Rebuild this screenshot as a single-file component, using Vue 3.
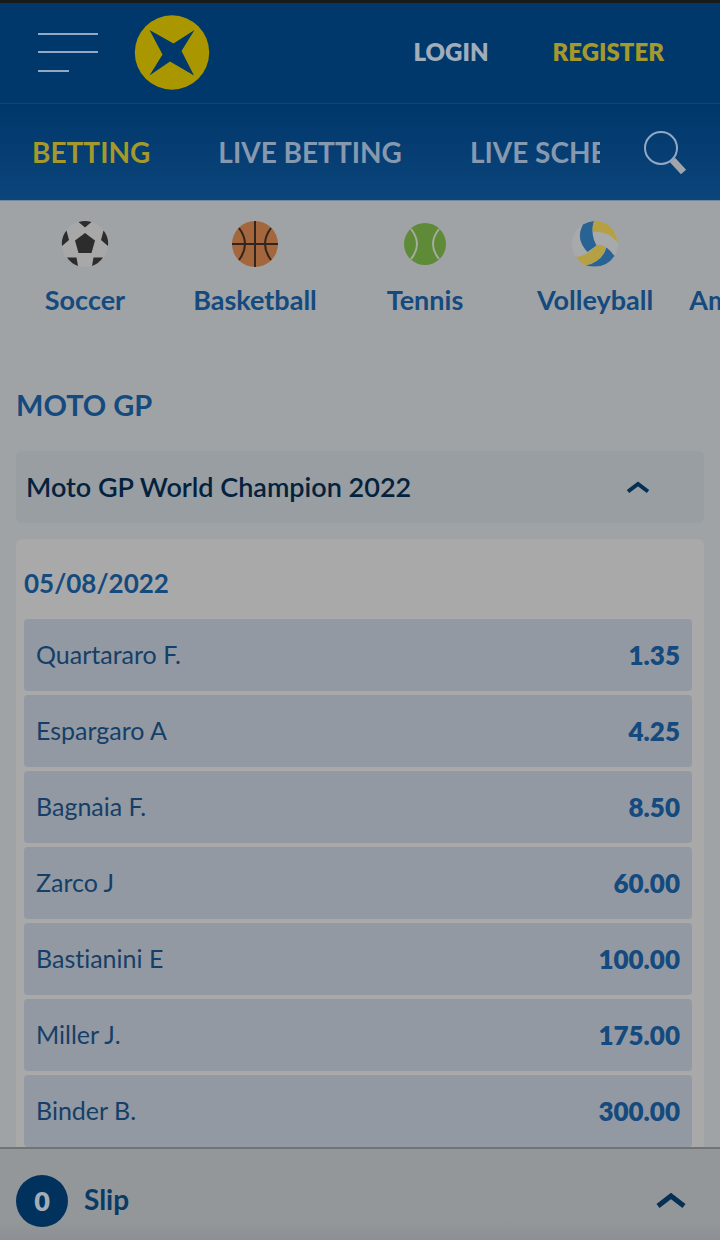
<script setup>
import { ref } from 'vue'

const navItems = ['BETTING', 'LIVE BETTING', 'LIVE SCHEDULE']
const activeNav = ref('BETTING')
const open = ref(true)

const sports = [
  { id: 'soccer', name: 'Soccer' },
  { id: 'basketball', name: 'Basketball' },
  { id: 'tennis', name: 'Tennis' },
  { id: 'volleyball', name: 'Volleyball' },
  { id: 'football', name: 'Am. Football' },
]

const odds = [
  { rider: 'Quartararo F.', price: '1.35' },
  { rider: 'Espargaro A', price: '4.25' },
  { rider: 'Bagnaia F.', price: '8.50' },
  { rider: 'Zarco J', price: '60.00' },
  { rider: 'Bastianini E', price: '100.00' },
  { rider: 'Miller J.', price: '175.00' },
  { rider: 'Binder B.', price: '300.00' },
]
</script>

<template>
  <div class="app">
    <header class="header">
      <div class="topbar">
        <button class="menu" type="button" aria-label="Menu">
          <svg width="60" height="42" viewBox="0 0 60 42">
            <path d="M0 2H60M0 20H60M0 39H31" stroke="#93a9c3" stroke-width="2" />
          </svg>
        </button>
        <a class="logo" href="#" aria-label="Home">
          <svg width="76" height="76" viewBox="0 0 76 76">
            <circle cx="38" cy="37.500" r="37.200" fill="#aa9700" />
            <path d="M15.500 15 L39.500 28.500 L60.500 15 L47.500 36 L60 60.500 L36 46.500 L15.500 60.500 L28.500 39.500 Z" fill="#00386c" />
          </svg>
        </a>
        <div class="account">
          <a class="login" href="#">LOGIN</a>
          <a class="register" href="#">REGISTER</a>
        </div>
      </div>
      <div class="navbar">
        <nav class="nav">
          <a
            v-for="item in navItems"
            :key="item"
            href="#"
            :class="{ active: item === activeNav }"
            @click.prevent="activeNav = item"
          >{{ item }}</a>
        </nav>
        <button class="search" type="button" aria-label="Search">
          <svg width="44" height="46" viewBox="0 0 44 46">
            <circle cx="17" cy="19" r="16" fill="none" stroke="#93a9c3" stroke-width="2" />
            <path d="M28.500 31 L39.500 43" stroke="#a0a6ac" stroke-width="7" />
          </svg>
        </button>
      </div>
    </header>

    <main class="content">
      <nav class="sports">
        <a v-for="s in sports" :key="s.id" href="#" class="sport">
          <svg v-if="s.id === 'soccer'" width="48" height="48" viewBox="0 0 48 48">
            <circle cx="24" cy="24" r="23" fill="#a8a8a8" />
            <path d="M24 13 L34 20.500 L30.500 33 H17.500 L14 20.500 Z M17.500 2 Q24 0 30.500 2 L24 7.500 Z M5.500 10.500 L8 20 L1 26 Q0 17 5.500 10.500 Z M42.500 10.500 L40 20 L47 26 Q48 17 42.500 10.500 Z M6 37.500 H15.500 L17 46 Q10 43.500 6 37.500 Z M42 37.500 H32.500 L31 46 Q38 43.500 42 37.500 Z" fill="#2c2c2d" />
          </svg>
          <svg v-else-if="s.id === 'basketball'" width="48" height="48" viewBox="0 0 48 48">
            <circle cx="24" cy="24" r="23" fill="#a4663c" />
            <path d="M24 1V47M1 24H47M8 8Q20 24 8 40M40 8Q28 24 40 40" fill="none" stroke="#33251d" stroke-width="2" />
          </svg>
          <svg v-else-if="s.id === 'tennis'" width="48" height="48" viewBox="0 0 48 48">
            <circle cx="24" cy="24" r="21" fill="#5f8a38" />
            <path d="M10 9Q22 24 10 39M38 9Q26 24 38 39" fill="none" stroke="#a5aca0" stroke-width="2" />
          </svg>
          <svg v-else-if="s.id === 'volleyball'" width="48" height="48" viewBox="0 0 48 48">
            <circle cx="24" cy="24" r="23" fill="#a8a9aa" />
            <path d="M12 4.500 Q17 1.500 23 1 Q19 14 25.500 25.500 L16.500 32 Q4 19 12 4.500 Z" fill="#286393" />
            <path d="M23 1 Q43 1 47 23 Q37 10 21.500 12 Q21 6 23 1 Z" fill="#b5a143" />
            <path d="M5 37 Q16 36 26 25 Q31 24 35 27.500 Q30 42 15 45.500 Q9 43 5 37 Z" fill="#b5a143" />
            <path d="M35.500 27.500 Q40 31 43.500 36 Q34 50 15 45.500 Q31 42 35.500 27.500 Z" fill="#286393" />
          </svg>
          <svg v-else width="48" height="48" viewBox="0 0 48 48">
            <ellipse cx="24" cy="24" rx="22" ry="14" fill="#7a4a2c" />
            <path d="M15 24H33M20 20V28M24 20V28M28 20V28" stroke="#a7a8a9" stroke-width="2" />
          </svg>
          <span>{{ s.name }}</span>
        </a>
      </nav>

      <h1 class="title">MOTO GP</h1>

      <button class="event" type="button" :aria-expanded="open" @click="open = !open">
        <span class="event-name">Moto GP World Champion 2022</span>
        <svg width="24" height="14" viewBox="0 0 24 14">
          <path d="M2 11.500 L12 4 L22 11.500" fill="none" stroke="#062f54" stroke-width="4" />
        </svg>
      </button>

      <section v-if="open" class="card">
        <h2 class="date">05/08/2022</h2>
        <button v-for="o in odds" :key="o.rider" class="row" type="button">
          <span class="rider">{{ o.rider }}</span>
          <span class="price">{{ o.price }}</span>
        </button>
      </section>
    </main>

    <button class="slip" type="button">
      <span class="count">0</span>
      <span class="slip-label">Slip</span>
      <svg width="30" height="18" viewBox="0 0 30 18">
        <path d="M2 14 L15 4 L28 14" fill="none" stroke="#062f54" stroke-width="5" />
      </svg>
    </button>
  </div>
</template>

<style>
body {
  background: #9fa3a6;
}
</style>

<style scoped>
.app {
  display: flex;
  flex-direction: column;
  height: 100vh;
  box-sizing: border-box;
  border-top: 3px solid #181a1c;
  background: #9fa3a6;
  font-family: Lato, "Noto Sans", sans-serif;
  font-variant-ligatures: none;
}

button {
  margin: 0;
  padding: 0;
  border: 0;
  background: none;
  font-family: inherit;
  font-variant-ligatures: inherit;
  text-align: left;
  cursor: pointer;
}

a {
  text-decoration: none;
  white-space: nowrap;
}

svg {
  display: block;
  flex: none;
}

.header {
  flex: none;
  background: #00386c;
}

.topbar {
  display: flex;
  align-items: center;
  justify-content: space-between;
  height: 100px;
  padding: 0 56px 0 38px;
  border-bottom: 1px solid #114479;
}

.logo {
  margin: 0 auto 0 36px;
}

.account {
  display: flex;
  gap: 64px;
  padding-bottom: 4px;
  font-size: 24px;
  font-weight: 800;
}

.login {
  color: #a0adba;
}

.register {
  color: #a4992a;
}

.navbar {
  display: flex;
  align-items: center;
  height: 96px;
  padding: 0 32px;
  border-bottom: 1px solid #7189a0;
  background: linear-gradient(#00376b, #0c457b);
}

.nav {
  display: flex;
  flex: 1;
  gap: 68px;
  min-width: 0;
  margin-right: 44px;
  overflow: hidden;
  font-size: 28px;
  font-weight: 700;
}

.nav a {
  color: #8799af;
}

.nav a.active {
  color: #a4992a;
}

.content {
  flex: 1;
  min-height: 0;
  overflow: auto;
  scrollbar-width: none;
}

.sports {
  display: flex;
  overflow: hidden;
}

.sport {
  display: flex;
  flex: 0 0 170px;
  flex-direction: column;
  align-items: center;
  gap: 16px;
  padding-top: 19px;
  color: #154a7e;
  font-size: 27px;
  font-weight: 700;
  line-height: 32px;
}

.title {
  margin: 72px 16px 29px;
  color: #154a7e;
  font-size: 29px;
  font-weight: 700;
  line-height: 34px;
}

.event {
  display: flex;
  align-items: center;
  justify-content: space-between;
  width: calc(100% - 32px);
  height: 72px;
  margin: 0 16px 16px;
  padding: 0 54px 0 10px;
  border-radius: 6px;
  background: #999ea2;
  color: #04223e;
  font-size: 27px;
  font-weight: 600;
}

.event-name {
  padding-bottom: 2px;
}

.card {
  display: flex;
  flex-direction: column;
  gap: 4px;
  margin: 0 16px;
  padding: 0 12px 0 8px;
  border-radius: 6px 6px 0 0;
  background: #a9a9a9;
}

.date {
  margin: 0;
  padding: 28px 0 16px;
  color: #154a7e;
  font-size: 26px;
  font-weight: 700;
  line-height: 32px;
}

.row {
  display: flex;
  align-items: center;
  justify-content: space-between;
  height: 72px;
  padding: 0 12px;
  border-radius: 4px;
  background: #9299a2;
}

.rider {
  padding-bottom: 2px;
  color: #153f68;
  font-size: 25px;
}

.price {
  color: #154a7e;
  font-size: 26px;
  font-weight: 800;
}

.slip {
  display: flex;
  flex: none;
  align-items: center;
  gap: 16px;
  height: 93px;
  padding: 12px 34px 0 16px;
  border-top: 2px solid #717477;
  background: linear-gradient(#93979a 80%, #8c8f93);
}

.count {
  display: flex;
  align-items: center;
  justify-content: center;
  width: 52px;
  height: 52px;
  border-radius: 50%;
  background: #00325d;
  color: #a4adb6;
  font-size: 27px;
  font-weight: 800;
}

.slip-label {
  flex: 1;
  padding-bottom: 4px;
  color: #0a3a66;
  font-size: 28px;
  font-weight: 700;
}
</style>
